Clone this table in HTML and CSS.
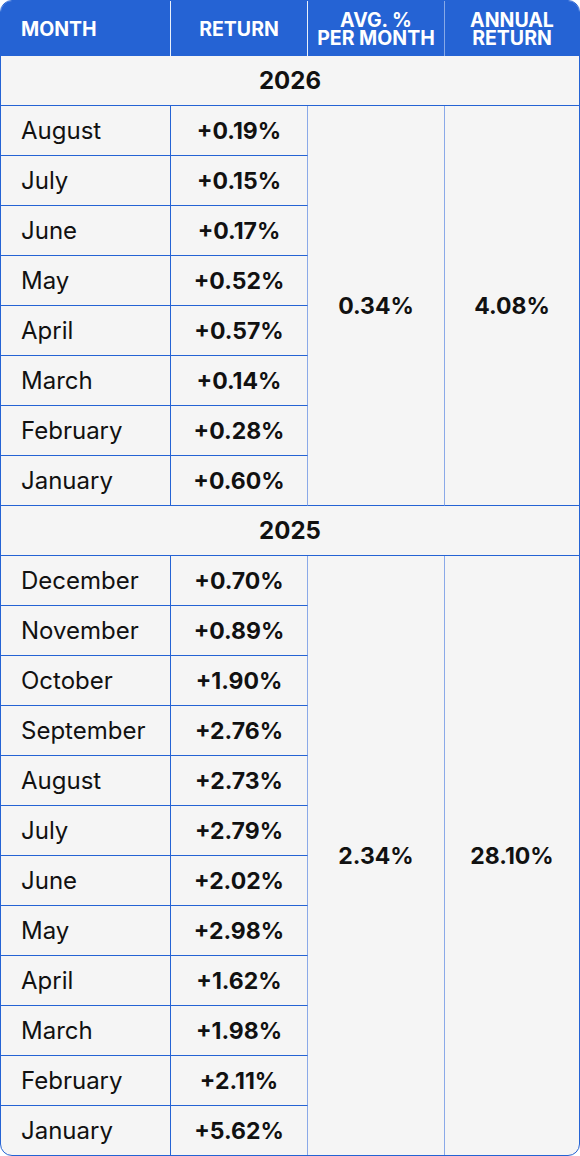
FILE: index.html
```html
<!DOCTYPE html>
<html lang="en">
<head>
  <meta charset="UTF-8">
  <meta name="viewport" content="width=device-width, initial-scale=1">
  <title>Monthly Returns</title>
  <link rel="stylesheet" href="styles.css">
</head>
<body>
  <div class="table-wrap">
    <table class="returns">
      <colgroup>
        <col class="c-month">
        <col class="c-return">
        <col class="c-avg">
        <col class="c-annual">
      </colgroup>
      <thead>
        <tr>
          <th class="left">Month</th>
          <th>Return</th>
          <th class="soft">Avg. %<br>per month</th>
          <th class="soft">Annual<br>return</th>
        </tr>
      </thead>
      <tbody>
        <tr class="year"><td colspan="4">2026</td></tr>
        <tr><td class="month">August</td><td class="ret">+0.19%</td><td class="sum" rowspan="8">0.34%</td><td class="sum" rowspan="8">4.08%</td></tr>
        <tr><td class="month">July</td><td class="ret">+0.15%</td></tr>
        <tr><td class="month">June</td><td class="ret">+0.17%</td></tr>
        <tr><td class="month">May</td><td class="ret">+0.52%</td></tr>
        <tr><td class="month">April</td><td class="ret">+0.57%</td></tr>
        <tr><td class="month">March</td><td class="ret">+0.14%</td></tr>
        <tr><td class="month">February</td><td class="ret">+0.28%</td></tr>
        <tr><td class="month">January</td><td class="ret">+0.60%</td></tr>

        <tr class="year"><td colspan="4">2025</td></tr>
        <tr><td class="month">December</td><td class="ret">+0.70%</td><td class="sum last" rowspan="12">2.34%</td><td class="sum last" rowspan="12">28.10%</td></tr>
        <tr><td class="month">November</td><td class="ret">+0.89%</td></tr>
        <tr><td class="month">October</td><td class="ret">+1.90%</td></tr>
        <tr><td class="month">September</td><td class="ret">+2.76%</td></tr>
        <tr><td class="month">August</td><td class="ret">+2.73%</td></tr>
        <tr><td class="month">July</td><td class="ret">+2.79%</td></tr>
        <tr><td class="month">June</td><td class="ret">+2.02%</td></tr>
        <tr><td class="month">May</td><td class="ret">+2.98%</td></tr>
        <tr><td class="month">April</td><td class="ret">+1.62%</td></tr>
        <tr><td class="month">March</td><td class="ret">+1.98%</td></tr>
        <tr><td class="month">February</td><td class="ret">+2.11%</td></tr>
        <tr class="last-row"><td class="month">January</td><td class="ret">+5.62%</td></tr>
      </tbody>
    </table>
  </div>
</body>
</html>
```

FILE: styles.css
```css
/* base */
* { box-sizing: border-box; margin: 0; padding: 0; }
body {
  font-family: Inter, "Noto Sans", sans-serif;
  background: #ffffff;
  color: #111;
  width: 580px;
}

/* wrapper gives the rounded blue frame */
.table-wrap {
  border: 1px solid #2563d4;
  border-radius: 12px;
  overflow: hidden;
  background: #f5f5f5;
}

.returns {
  width: 578px;
  table-layout: fixed;
  border-collapse: separate;
  border-spacing: 0;
}
.c-month  { width: 170px; }
.c-return { width: 137px; }
.c-avg    { width: 137px; }
.c-annual { width: 134px; }

/* header */
thead th {
  background: #2563d4;
  color: #fff;
  height: 55px;
  font-size: 19.5px;
  font-weight: 700;
  line-height: 18px;
  text-transform: uppercase;
  text-align: center;
  vertical-align: middle;
  border-right: 1px solid rgba(255,255,255,0.9);
}
thead th.left { text-align: left; padding-left: 20px; }
thead th.soft { border-right-color: rgba(255,255,255,0.45); }
thead th:last-child { border-right: none; }

/* body cells */
tbody td {
  height: 50px;
  font-size: 24px;
  line-height: 26px;
  vertical-align: middle;
  border-bottom: 1px solid #2563d4;
  border-right: 1px solid #2563d4;
}
.month { padding-left: 20px; font-weight: 400; }
.ret {
  text-align: center;
  font-size: 23px;
  font-weight: 700;
  border-right-color: #8aa9e8;
}
.sum {
  text-align: center;
  font-size: 23px;
  font-weight: 700;
  border-right-color: #8aa9e8;
}
.sum + .sum { border-right: none; }
.sum.last { border-bottom: none; }

.year td {
  text-align: center;
  font-weight: 700;
  border-right: none;
}

.last-row td { border-bottom: none; height: 49px; }
```
